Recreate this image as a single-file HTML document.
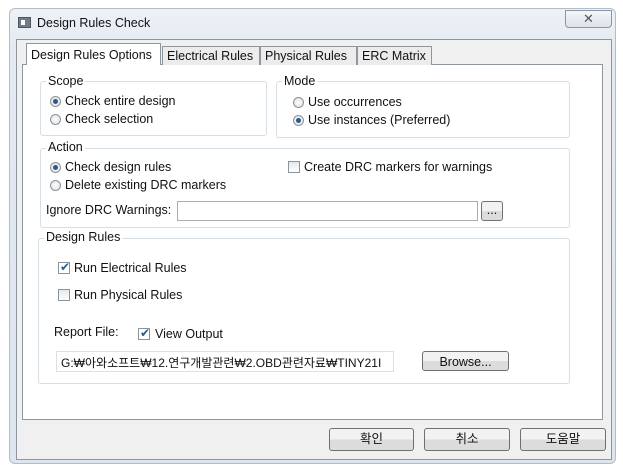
<!DOCTYPE html><html><head><style>
*{box-sizing:border-box}
body{margin:0;width:623px;height:466px;background:#fff;font-family:"Liberation Sans","Noto Sans CJK KR",sans-serif;font-size:12.5px;color:#111;position:relative;overflow:hidden}
.a{position:absolute;white-space:nowrap}
.win{left:9px;top:8px;width:607px;height:456px;border:1px solid #b4bcc5;border-radius:6px;background:linear-gradient(#eef2f7,#e3eaf2 40px,#dde5ee);}
.body{left:16px;top:39px;width:596px;height:421px;background:#f0f0f0;border:1px solid #8e959c}
.panel{left:22px;top:64px;width:581px;height:356px;background:#fff;border:1px solid #8f969d}
.tab{top:46px;height:19px;background:#ececec;border:1px solid #8f969d;border-bottom:none;padding:2px 4px 0}
.grp{border:1px solid #d5dfe5;border-radius:3px}
.gl{background:#fff;padding:0 2px}
.r{width:11px;height:11px;border-radius:50%;border:1px solid #8a949c;background:radial-gradient(#fff,#dcdcdc)}
.r.on::after{content:"";position:absolute;left:2px;top:2px;width:5px;height:5px;border-radius:50%;background:#2a5a8c}
.c{width:12px;height:12px;border:1px solid #8a949c;background:linear-gradient(#e8e8e8,#fff)}
.btn{border:1px solid #707070;border-radius:3px;background:linear-gradient(#f2f2f2 50%,#dcdcdc 50%);text-align:center;line-height:20px}
.inp{border:1px solid #abadb3;background:#fff}
</style></head><body>
<div class="a win"></div>
<div class="a" style="left:18px;top:17px;width:13px;height:11px;background:#6f7d8a;border:1px solid #555"><div style="position:absolute;left:2px;top:2px;width:4px;height:5px;background:#fff"></div></div>
<div class="a" style="left:37px;top:16px;font-size:12.5px">Design Rules Check</div>
<div class="a" style="left:565px;top:10px;width:47px;height:18px;border:1px solid #8a96a3;border-radius:0 0 4px 4px;background:linear-gradient(#f4f6f9,#dde3ea);text-align:center;color:#555;font-size:13px;line-height:15px">✕</div>
<div class="a body"></div>
<div class="a panel"></div>
<div class="a tab" style="left:162px;width:98px">Electrical Rules</div>
<div class="a tab" style="left:260px;width:97px">Physical Rules</div>
<div class="a tab" style="left:357px;width:75px">ERC Matrix</div>
<div class="a tab" style="left:26px;top:43px;height:22px;width:135px;background:#fff;padding-top:4px">Design Rules Options</div>

<div class="a grp" style="left:40px;top:81px;width:227px;height:55px"></div>
<div class="a gl" style="left:46px;top:74px">Scope</div>
<div class="a r on" style="left:50px;top:96px"></div><div class="a" style="left:65px;top:94px">Check entire design</div>
<div class="a r" style="left:50px;top:114px"></div><div class="a" style="left:65px;top:112px">Check selection</div>

<div class="a grp" style="left:276px;top:81px;width:294px;height:57px"></div>
<div class="a gl" style="left:282px;top:74px">Mode</div>
<div class="a r" style="left:293px;top:97px"></div><div class="a" style="left:308px;top:95px">Use occurrences</div>
<div class="a r on" style="left:293px;top:115px"></div><div class="a" style="left:308px;top:113px">Use instances (Preferred)</div>

<div class="a grp" style="left:40px;top:148px;width:530px;height:80px"></div>
<div class="a gl" style="left:46px;top:140px">Action</div>
<div class="a r on" style="left:50px;top:162px"></div><div class="a" style="left:65px;top:160px">Check design rules</div>
<div class="a r" style="left:50px;top:180px"></div><div class="a" style="left:65px;top:178px">Delete existing DRC markers</div>
<div class="a c" style="left:288px;top:161px"></div><div class="a" style="left:304px;top:160px">Create DRC markers for warnings</div>
<div class="a" style="left:46px;top:203px">Ignore DRC Warnings:</div>
<div class="a inp" style="left:177px;top:201px;width:301px;height:20px"></div>
<div class="a btn" style="left:481px;top:201px;width:22px;height:20px;line-height:16px">...</div>

<div class="a grp" style="left:38px;top:238px;width:532px;height:146px"></div>
<div class="a gl" style="left:44px;top:230px">Design Rules</div>
<div class="a c" style="left:58px;top:262px;background:#fff"><span class="a" style="left:1px;top:-3px;color:#2a5a8c;font-size:12px">✔</span></div><div class="a" style="left:74px;top:261px">Run Electrical Rules</div>
<div class="a c" style="left:58px;top:289px"></div><div class="a" style="left:74px;top:288px">Run Physical Rules</div>
<div class="a" style="left:54px;top:325px">Report File:</div>
<div class="a c" style="left:138px;top:328px;background:#fff"><span class="a" style="left:1px;top:-3px;color:#2a5a8c;font-size:12px">✔</span></div><div class="a" style="left:155px;top:327px">View Output</div>
<div class="a inp" style="left:56px;top:351px;width:338px;height:21px;overflow:hidden;padding:2px 4px;font-size:12px;border-color:#e0e0e0">G:₩아와소프트₩12.연구개발관련₩2.OBD관련자료₩TINY21I</div>
<div class="a btn" style="left:422px;top:351px;width:87px;height:20px">Browse...</div>

<div class="a btn" style="left:329px;top:428px;width:85px;height:23px;line-height:21px">확인</div>
<div class="a btn" style="left:424px;top:428px;width:86px;height:23px;line-height:21px">취소</div>
<div class="a btn" style="left:520px;top:428px;width:86px;height:23px;line-height:21px">도움말</div>
</body></html>
